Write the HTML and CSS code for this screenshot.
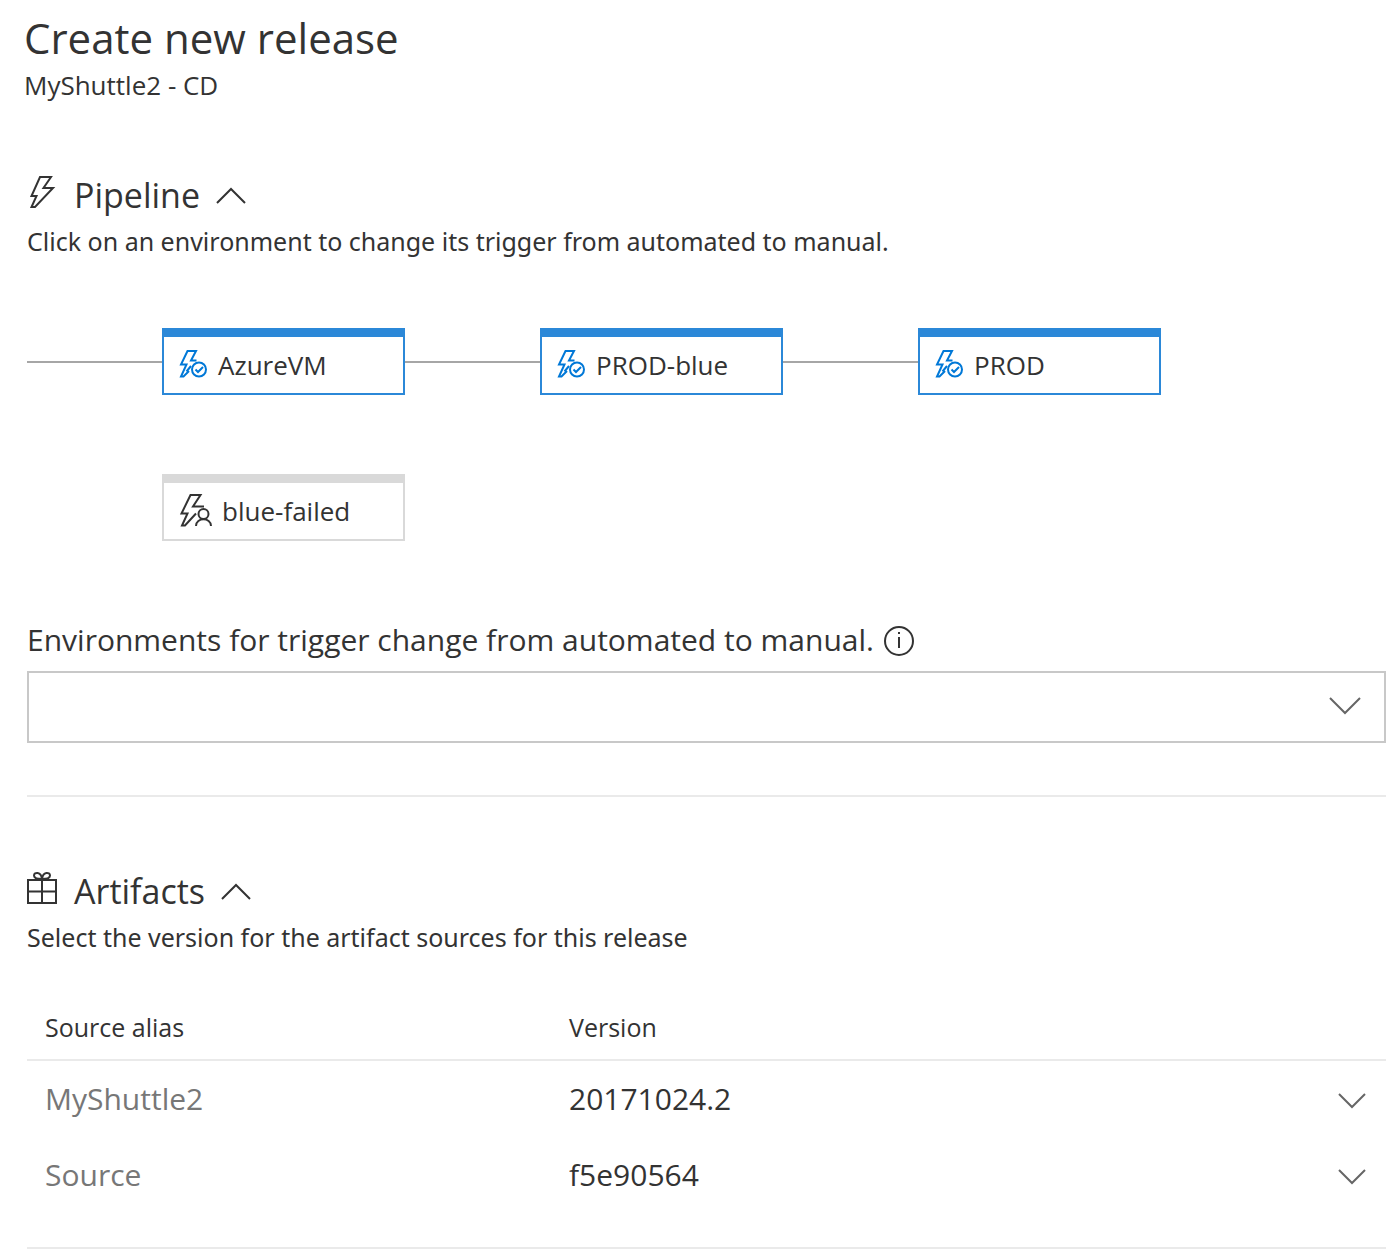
FILE: index.html
```html
<!DOCTYPE html>
<html lang="en">
<head>
<meta charset="utf-8">
<meta name="viewport" content="width=device-width, initial-scale=1">
<title>Create new release</title>
<link rel="stylesheet" href="styles.css">
</head>
<body>
<main class="page">
  <header class="page-header">
    <h1 class="title">Create new release</h1>
    <p class="subtitle">MyShuttle2 - CD</p>
  </header>

  <section class="section">
    <div class="section-head">
      <svg class="section-icon" width="30" height="36" viewBox="0 0 30 36" aria-hidden="true"><path d="M13 3H24L16.500 14H26L8 33H4.500L9.500 22H4.500Z"/></svg>
      <h2 class="heading">Pipeline</h2>
      <button class="toggle" type="button" aria-label="Collapse Pipeline" aria-expanded="true"><svg width="32" height="20" viewBox="0 0 32 20"><path d="M2 18L16 4L30 18"/></svg></button>
    </div>
    <p class="text">Click on an environment to change its trigger from automated to manual.</p>

    <div class="pipeline">
      <div class="lane">
        <span class="link"></span>
        <button class="stage stage-auto" type="button"><svg width="30" height="30" viewBox="0 0 30 30" aria-hidden="true"><path d="M18.500 11.500H13L18 2H9.500L3 15.500H8.500L3 27.500H5.500L11 22M8.500 22.500L13 17"/><circle cx="21" cy="20.500" r="7"/><path d="M17.500 20.500L20 23L25 18"/></svg>AzureVM</button>
        <span class="link"></span>
        <button class="stage stage-auto" type="button"><svg width="30" height="30" viewBox="0 0 30 30" aria-hidden="true"><path d="M18.500 11.500H13L18 2H9.500L3 15.500H8.500L3 27.500H5.500L11 22M8.500 22.500L13 17"/><circle cx="21" cy="20.500" r="7"/><path d="M17.500 20.500L20 23L25 18"/></svg>PROD-blue</button>
        <span class="link"></span>
        <button class="stage stage-auto" type="button"><svg width="30" height="30" viewBox="0 0 30 30" aria-hidden="true"><path d="M18.500 11.500H13L18 2H9.500L3 15.500H8.500L3 27.500H5.500L11 22M8.500 22.500L13 17"/><circle cx="21" cy="20.500" r="7"/><path d="M17.500 20.500L20 23L25 18"/></svg>PROD</button>
      </div>
      <div class="lane">
        <span class="link link-none"></span>
        <button class="stage" type="button"><svg width="34" height="36" viewBox="0 0 34 36" aria-hidden="true"><path d="M26 14.500H15L22.500 3H12.500L3.500 21.500H9.500L4 33.500H7L18 21.500"/><circle cx="25.500" cy="22" r="5"/><path d="M18 34C18 25 33 25 33 34"/></svg>blue-failed</button>
      </div>
    </div>

    <div class="field-label">
      <label for="environments">Environments for trigger change from automated to manual.</label>
      <button class="toggle" type="button" aria-label="More information"><svg width="30" height="32" viewBox="0 0 30 32"><circle cx="15" cy="17" r="14"/><path d="M15 13V24M15 8V10"/></svg></button>
    </div>
    <div class="dropdown dropdown-boxed">
      <select id="environments"><option></option></select>
      <svg width="32" height="20" viewBox="0 0 32 20" aria-hidden="true"><path d="M1 1L16 16L31 1"/></svg>
    </div>
  </section>

  <hr class="divider">

  <section class="section">
    <div class="section-head">
      <svg class="section-icon" width="30" height="36" viewBox="0 0 30 36" aria-hidden="true"><path d="M1 10H29V33H1ZM1 21.500H29M15 10V33M15 9C11 9 7 8.500 7 5.500C7 2 14 1 15 9C16 1 23 2 23 5.500C23 8.500 19 9 15 9Z"/></svg>
      <h2 class="heading">Artifacts</h2>
      <button class="toggle" type="button" aria-label="Collapse Artifacts" aria-expanded="true"><svg width="32" height="20" viewBox="0 0 32 20"><path d="M2 18L16 4L30 18"/></svg></button>
    </div>
    <p class="text">Select the version for the artifact sources for this release</p>

    <table class="artifacts">
      <thead>
        <tr><th scope="col">Source alias</th><th scope="col">Version</th></tr>
      </thead>
      <tbody>
        <tr>
          <td><label for="version-myshuttle2">MyShuttle2</label></td>
          <td><div class="dropdown">
            <select id="version-myshuttle2"><option>20171024.2</option></select>
            <svg width="28" height="18" viewBox="0 0 28 18" aria-hidden="true"><path d="M1 4L14 17L27 4"/></svg>
          </div></td>
        </tr>
        <tr>
          <td><label for="version-source">Source</label></td>
          <td><div class="dropdown">
            <select id="version-source"><option>f5e90564</option></select>
            <svg width="28" height="18" viewBox="0 0 28 18" aria-hidden="true"><path d="M1 4L14 17L27 4"/></svg>
          </div></td>
        </tr>
      </tbody>
    </table>
  </section>
  <hr class="divider">
</main>
</body>
</html>
```
FILE: styles.css
```css
* { box-sizing: border-box; }

body {
  margin: 0;
  background: #fff;
  color: #333;
  font: 26px/36px "Open Sans", "Noto Sans", sans-serif;
}

h1, h2, p { margin: 0; font-weight: 400; }

button, select {
  border: 0;
  background: none;
  color: inherit;
  font: inherit;
}

svg {
  display: block;
  flex: none;
  overflow: visible;
  fill: none;
  stroke: currentColor;
  stroke-width: 2;
}

.page { padding: 9px 14px 0 24px; }
.page-header { margin-bottom: 68px; }
.title { font-size: 42px; line-height: 58px; }
.text { font-family: "Noto Sans", sans-serif; font-size: 25px; }
.section { padding-left: 3px; }

.section-head {
  display: flex;
  align-items: center;
  height: 48px;
  margin-bottom: 4px;
}
.section-icon { margin: 0 17px 7px 0; }
.heading { margin-right: 15px; font-size: 34px; line-height: 48px; }
.toggle { padding: 0; }

.pipeline {
  display: grid;
  gap: 79px;
  margin: 69px 0 77px;
}
.lane { display: flex; align-items: center; }
.link { width: 135px; height: 2px; background: #a6a6a6; }
.link-none { background: none; }

.stage {
  display: flex;
  align-items: center;
  gap: 10px;
  width: 243px;
  height: 67px;
  padding: 0 14px;
  border: 2px solid #d9d9d9;
  border-top-width: 9px;
}
.stage svg { margin-bottom: 3px; }
.stage-auto { border-color: #2b88d8; }
.stage-auto svg { color: #0078d7; }

.field-label {
  display: flex;
  align-items: center;
  gap: 10px;
  height: 44px;
  margin-bottom: 9px;
  font-size: 30px;
}

.dropdown { display: grid; align-items: center; }
.dropdown > * { grid-area: 1 / 1; }
.dropdown > svg {
  justify-self: end;
  margin-right: 20px;
  color: #666;
  pointer-events: none;
}
.dropdown select {
  width: 100%;
  height: 72px;
  padding: 0;
  appearance: none;
}
.dropdown-boxed select { padding: 0 16px; border: 2px solid #c8c8c8; }
.dropdown-boxed > svg { margin-right: 25px; }

.divider {
  height: 2px;
  margin: 52px 0 70px 3px;
  border: 0;
  background: #eaeaea;
}
.section + .divider:last-child { margin: 34px 0 0 3px; }

.artifacts {
  width: 100%;
  margin-top: 39px;
  border-collapse: separate;
  border-spacing: 0;
  table-layout: fixed;
}
.artifacts th, .artifacts td { padding: 0; text-align: left; }
.artifacts th {
  height: 67px;
  border-bottom: 2px solid #eaeaea;
  font-size: 25px;
  font-weight: 400;
}
.artifacts th:first-child { width: 542px; }
.artifacts th:first-child, .artifacts td:first-child { padding-left: 18px; }
.artifacts td { height: 76px; font-size: 30px; }
.artifacts label { color: #777; }
```
